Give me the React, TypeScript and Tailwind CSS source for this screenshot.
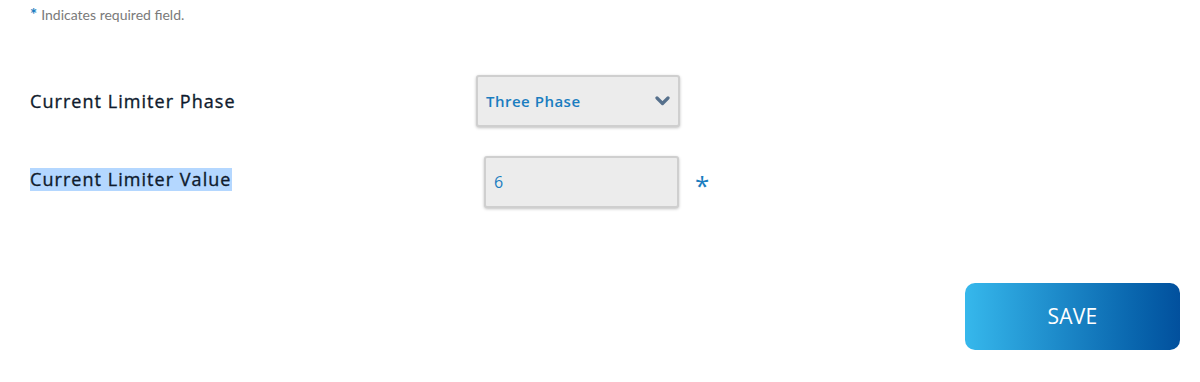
const label =
  "text-[18px] tracking-[1.05px] text-[#0f1b2d] font-['Open_Sans',sans-serif] leading-[23px] [-webkit-text-stroke:0.35px_#0f1b2d]";

function Chevron() {
  return (
    <svg width="15" height="10" viewBox="0 0 15 10" className="text-[#56708c]">
      <polyline
        points="2,2 7.5,7.5 13,2"
        fill="none"
        stroke="currentColor"
        strokeWidth="3.2"
        strokeLinecap="round"
        strokeLinejoin="round"
      />
    </svg>
  );
}

export default function App() {
  return (
    <div className="w-[1200px] h-[382px] bg-white font-['Open_Sans',sans-serif]">
      <div className="pt-[6px] pl-[30px] flex items-center gap-[4px] font-['Lato',sans-serif] text-[14px] text-[#7a7a7a]">
        <span className="text-[#1a7dc0] font-bold text-[17px] leading-[18px]">*</span>
        <span className="leading-[18px]">Indicates required field.</span>
      </div>

      {/* phase row */}
      <div className="mt-[51px] flex items-center pl-[30px]">
        <div className={`w-[446px] ${label}`}>Current Limiter Phase</div>
        <div className="w-[204px] h-[52px] border-2 border-[#cfcfcf] rounded-[3px] bg-[#ececec] shadow-[0_1px_3px_rgba(0,0,0,0.25)] flex items-center justify-between pl-[8px] pr-[8px]">
          <span className="text-[15px] font-semibold tracking-[0.5px] text-[#1a7dc0]">
            Three Phase
          </span>
          <Chevron />
        </div>
      </div>

      {/* value row */}
      <div className="mt-[29px] flex items-center pl-[30px]">
        <div className="w-[454px] -mt-[4px]">
          <span className={`${label} bg-[#b4d7ff] inline-block`}>Current Limiter Value</span>
        </div>
        <div className="w-[195px] h-[52px] border-2 border-[#cfcfcf] rounded-[3px] bg-[#ececec] shadow-[0_1px_3px_rgba(0,0,0,0.25)] flex items-center pl-[8px]">
          <span className="text-[16px] text-[#1a7dc0]">6</span>
        </div>
        <span className="ml-[16px] mt-[6px] text-[26px] font-normal text-[#1a7dc0] leading-none">*</span>
      </div>

      <div className="mt-[75px] flex justify-end pr-[20px]">
        <button
          type="button"
          className="w-[215px] h-[67px] rounded-[10px] bg-gradient-to-r from-[#36b8ec] to-[#02509d] text-white text-[21px] tracking-[0.3px]"
        >
          SAVE
        </button>
      </div>
    </div>
  );
}
